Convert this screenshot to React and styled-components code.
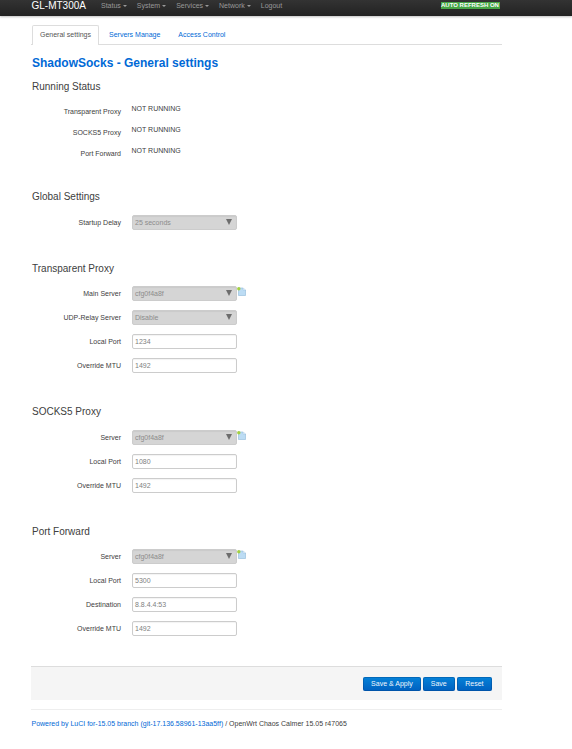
import React from 'react';
import styled, { createGlobalStyle } from 'styled-components';

const GlobalStyle = createGlobalStyle`
  html, body {
    margin: 0;
    padding: 0;
    background: #fff;
    font-family: "Liberation Sans", Arial, sans-serif;
    font-size: 7px;
    color: #333;
  }
`;

const Navbar = styled.div`
  height: 16px;
  background: linear-gradient(to bottom, #333, #222);
  box-shadow: 0 1px 2px rgba(0, 0, 0, 0.25);
  display: flex;
  align-items: center;
  padding-left: 31.5px;
  overflow: hidden;
  position: relative;
`;

const Brand = styled.div`
  color: #fff;
  font-size: 10px;
  line-height: 11px;
  width: 69.5px;
  margin-top: -6px;
`;

const NavItem = styled.div`
  color: #999;
  font-size: 7px;
  margin-right: 10px;
  margin-top: -6px;
`;

const Caret = styled.span`
  display: inline-block;
  margin-left: 2px;
  vertical-align: middle;
  border-left: 2px solid transparent;
  border-right: 2px solid transparent;
  border-top: 2px solid #999;
`;

const RefreshBadge = styled.div`
  position: absolute;
  left: 441px;
  top: 2px;
  height: 7px;
  line-height: 7px;
  width: 59px;
  background: #46a546;
  color: #fff;
  font-size: 6px;
  font-weight: bold;
  white-space: nowrap;
`;

const Page = styled.div`
  width: 471px;
  margin-left: 31px;
`;

const Tabs = styled.div`
  display: flex;
  margin-top: 9px;
  height: 19px;
  border-bottom: 1px solid #ddd;
`;

const Tab = styled.div`
  height: ${(p) => (p.$active ? '20px' : '19px')};
  line-height: 18px;
  padding: 0 7px;
  margin: 0 1px;
  color: ${(p) => (p.$active ? '#555' : '#0069d6')};
  background: #fff;
  box-sizing: border-box;
  border: 1px solid ${(p) => (p.$active ? '#ddd' : 'transparent')};
  border-bottom: none;
  border-radius: 2px 2px 0 0;
`;

const Title = styled.h2`
  margin: 11px 0 0;
  padding-left: 1px;
  font-size: 12px;
  line-height: 14px;
  font-weight: bold;
  color: #0069d6;
`;

const SectionTitle = styled.h3`
  margin: ${(p) => p.$top || 0}px 0 0;
  padding-left: 1px;
  font-size: 10px;
  line-height: 12px;
  font-weight: normal;
  color: #404040;
`;

const Rows = styled.div`
  margin-top: ${(p) => p.$top || 0}px;
`;

const Row = styled.div`
  display: flex;
  align-items: center;
  height: 24px;
`;

const StatusRow = styled.div`
  display: flex;
  height: 21px;
`;

const Label = styled.div`
  width: 90px;
  text-align: right;
  color: #404040;
  flex-shrink: 0;
`;

const StatusLabel = styled(Label)`
  padding-top: 6px;
`;

const Value = styled.div`
  margin-left: 10.5px;
  color: #404040;
  padding-top: 3px;
`;

const Field = styled.div`
  margin-left: 11px;
  width: 105px;
  height: 15px;
  box-sizing: border-box;
  border: 1px solid #ccc;
  border-radius: 2px;
  box-shadow: inset 0 1px 1px rgba(0, 0, 0, 0.05);
  padding-left: 2px;
  line-height: 13px;
  color: #808080;
  background: #fff;
  font-size: 7px;
`;

const SelectField = styled(Field)`
  background: #d5d5d5;
  color: #8c8c8c;
  display: flex;
  align-items: center;
  justify-content: space-between;
  padding-right: 4px;
`;

const Arrow = styled.span`
  width: 0;
  height: 0;
  border-left: 3.5px solid transparent;
  border-right: 3.5px solid transparent;
  border-top: 6px solid #6d6d6d;
`;

const AddIcon = styled.svg`
  width: 9px;
  height: 9px;
  margin-top: -3px;
`;

const ActionBar = styled.div`
  margin-top: 26px;
  height: 34px;
  box-sizing: border-box;
  background: #f5f5f5;
  border-top: 1px solid #ddd;
  display: flex;
  align-items: center;
  justify-content: flex-end;
  gap: 2px;
  padding-right: 10px;
`;

const Button = styled.div`
  height: 14px;
  line-height: 14px;
  padding: 0 ${(p) => p.$pad || 8}px;
  color: #f0f6fc;
  font-size: 7px;
  border-radius: 2px;
  background: linear-gradient(to bottom, #0582d8, #0060c0);
  box-shadow: inset 0 0 0 1px rgba(0, 60, 130, 0.35);
  text-align: center;
`;

const Footer = styled.div`
  margin-top: 9px;
  border-top: 1px solid #eee;
  padding: 10px 0 0 0.5px;
  color: #404040;
  line-height: 8px;
`;

const FooterLink = styled.a`
  color: #0069d6;
`;

const Icon = () => (
  <AddIcon viewBox="0 0 9 9">
    <path d="M1.5 1 H6 L8.5 3 V8.5 H1.5 Z" fill="#bcdcf4" stroke="#8fb9d8" strokeWidth="0.6" />
    <path d="M6 1 V3 H8.5" fill="#eef6fc" stroke="#8fb9d8" strokeWidth="0.4" />
    <circle cx="1.8" cy="1.8" r="1.7" fill="#a4d040" />
  </AddIcon>
);

const Select = ({ value, icon }) => (
  <>
    <SelectField>
      {value}
      <Arrow />
    </SelectField>
    {icon && <Icon />}
  </>
);

export default function App() {
  return (
    <>
      <GlobalStyle />
      <Navbar>
        <Brand>GL-MT300A</Brand>
        <NavItem>Status<Caret /></NavItem>
        <NavItem>System<Caret /></NavItem>
        <NavItem>Services<Caret /></NavItem>
        <NavItem>Network<Caret /></NavItem>
        <NavItem>Logout</NavItem>
        <RefreshBadge>AUTO REFRESH ON</RefreshBadge>
      </Navbar>
      <Page>
        <Tabs>
          <Tab $active>General settings</Tab>
          <Tab>Servers Manage</Tab>
          <Tab>Access Control</Tab>
        </Tabs>
        <Title>ShadowSocks - General settings</Title>
        <SectionTitle $top={11}>Running Status</SectionTitle>
        <Rows $top={9}>
          <StatusRow><StatusLabel>Transparent Proxy</StatusLabel><Value>NOT RUNNING</Value></StatusRow>
          <StatusRow><StatusLabel>SOCKS5 Proxy</StatusLabel><Value>NOT RUNNING</Value></StatusRow>
          <StatusRow><StatusLabel>Port Forward</StatusLabel><Value>NOT RUNNING</Value></StatusRow>
        </Rows>
        <SectionTitle $top={26}>Global Settings</SectionTitle>
        <Rows $top={7}>
          <Row><Label>Startup Delay</Label><Select value="25 seconds" /></Row>
        </Rows>
        <SectionTitle $top={29}>Transparent Proxy</SectionTitle>
        <Rows $top={6}>
          <Row><Label>Main Server</Label><Select value="cfg0f4a8f" icon /></Row>
          <Row><Label>UDP-Relay Server</Label><Select value="Disable" /></Row>
          <Row><Label>Local Port</Label><Field>1234</Field></Row>
          <Row><Label>Override MTU</Label><Field>1492</Field></Row>
        </Rows>
        <SectionTitle $top={29}>SOCKS5 Proxy</SectionTitle>
        <Rows $top={7}>
          <Row><Label>Server</Label><Select value="cfg0f4a8f" icon /></Row>
          <Row><Label>Local Port</Label><Field>1080</Field></Row>
          <Row><Label>Override MTU</Label><Field>1492</Field></Row>
        </Rows>
        <SectionTitle $top={29}>Port Forward</SectionTitle>
        <Rows $top={6}>
          <Row><Label>Server</Label><Select value="cfg0f4a8f" icon /></Row>
          <Row><Label>Local Port</Label><Field>5300</Field></Row>
          <Row><Label>Destination</Label><Field>8.8.4.4:53</Field></Row>
          <Row><Label>Override MTU</Label><Field>1492</Field></Row>
        </Rows>
        <ActionBar>
          <Button>Save &amp; Apply</Button>
          <Button>Save</Button>
          <Button $pad={8.5}>Reset</Button>
        </ActionBar>
        <Footer>
          <FooterLink>Powered by LuCI for-15.05 branch (git-17.136.58961-13aa5ff)</FooterLink> / OpenWrt Chaos Calmer 15.05 r47065
        </Footer>
      </Page>
    </>
  );
}
